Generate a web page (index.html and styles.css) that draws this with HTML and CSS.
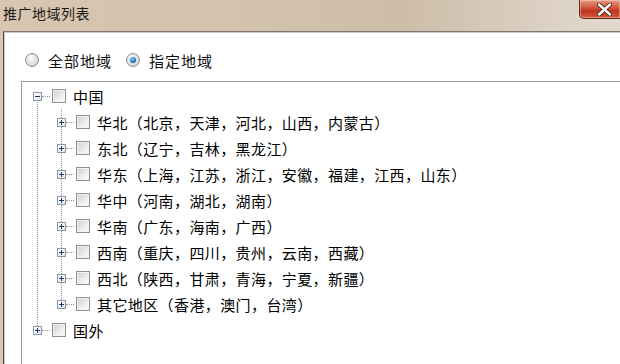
FILE: index.html
```html
<!DOCTYPE html>
<html lang="zh-CN">
<head>
  <meta charset="UTF-8">
  <title>推广地域列表</title>
  <link rel="stylesheet" href="styles.css">
</head>
<body>
  <div class="window">
    <div class="titlebar">
      <span class="title">推广地域列表</span>
      <button class="close">
        <svg width="15" height="13" viewBox="0 0 15 13">
          <path d="M2 1.5 L13 11.5 M13 1.5 L2 11.5" stroke="#4a1e14" stroke-width="4.2" stroke-linecap="round"/>
          <path d="M2 1.5 L13 11.5 M13 1.5 L2 11.5" stroke="#fff" stroke-width="2.4" stroke-linecap="round"/>
        </svg>
      </button>
    </div>

    <div class="frame">
      <div class="panel">
        <div class="radios">
          <label class="radio"><span class="dot"></span>全部地域</label>
          <label class="radio checked"><span class="dot"></span>指定地域</label>
        </div>

        <div class="tree-box">
          <ul class="tree">
            <li class="root first">
              <div class="row"><span class="exp minus"></span><span class="hline"></span><span class="chk"></span><span class="label">中国</span></div>
              <ul class="children">
                <li><div class="row"><span class="exp plus"></span><span class="hline"></span><span class="chk"></span><span class="label">华北（北京，天津，河北，山西，内蒙古）</span></div></li>
                <li><div class="row"><span class="exp plus"></span><span class="hline"></span><span class="chk"></span><span class="label">东北（辽宁，吉林，黑龙江）</span></div></li>
                <li><div class="row"><span class="exp plus"></span><span class="hline"></span><span class="chk"></span><span class="label">华东（上海，江苏，浙江，安徽，福建，江西，山东）</span></div></li>
                <li><div class="row"><span class="exp plus"></span><span class="hline"></span><span class="chk"></span><span class="label">华中（河南，湖北，湖南）</span></div></li>
                <li><div class="row"><span class="exp plus"></span><span class="hline"></span><span class="chk"></span><span class="label">华南（广东，海南，广西）</span></div></li>
                <li><div class="row"><span class="exp plus"></span><span class="hline"></span><span class="chk"></span><span class="label">西南（重庆，四川，贵州，云南，西藏）</span></div></li>
                <li><div class="row"><span class="exp plus"></span><span class="hline"></span><span class="chk"></span><span class="label">西北（陕西，甘肃，青海，宁夏，新疆）</span></div></li>
                <li><div class="row"><span class="exp plus"></span><span class="hline"></span><span class="chk"></span><span class="label">其它地区（香港，澳门，台湾）</span></div></li>
              </ul>
            </li>
            <li class="root last">
              <div class="row"><span class="exp plus"></span><span class="hline"></span><span class="chk"></span><span class="label">国外</span></div>
            </li>
          </ul>
        </div>
      </div>
    </div>
  </div>
</body>
</html>
```

FILE: styles.css
```css
body {
  margin: 0;
  padding: 0;
  background: #fff;
  font-family: "Noto Sans CJK SC", "Liberation Sans", sans-serif;
}
.window {
  width: 620px;
  height: 364px;
  overflow: hidden;
  background: linear-gradient(to right, #d8c6b1, #d2c1ab 45%, #cdbda8 65%, #ddd2c5 90%, #e2d9cd);
}
.titlebar {
  height: 31px;
  display: flex;
  justify-content: space-between;
  align-items: flex-start;
}
.title {
  font-size: 14px;
  line-height: 14px;
  color: #1c1a18;
  margin: 6px 0 0 3px;
  letter-spacing: 0.5px;
}
.close {
  width: 41px;
  height: 20px;
  margin-top: -1px;
  padding: 0 0 0 17px;
  border: 1px solid #5e2a1f;
  border-right: none;
  border-radius: 0 0 0 5px;
  background: linear-gradient(#e69a86, #cf5338 45%, #bf3420 60%, #d5583a);
  display: flex;
  align-items: center;
  box-shadow: inset 0 0 0 1px rgba(255,255,255,0.35);
}
.frame {
  padding-left: 3px;
  height: 333px;
}
.panel {
  height: 100%;
  background: #fff;
  border-left: 1px solid #4d4a46;
  border-top: 1px solid #7c7770;
  box-shadow: inset 1px 1px 0 #c9c6c2;
}
.radios {
  display: flex;
  align-items: center;
  height: 22px;
  padding: 17px 0 0 21px;
  font-size: 15px;
  letter-spacing: 1px;
  color: #111;
}
.radio {
  display: flex;
  align-items: center;
  margin-right: 14px;
}
.dot {
  width: 12px;
  height: 12px;
  border-radius: 50%;
  border: 1px solid #8d8d8d;
  background: radial-gradient(circle at 40% 35%, #fdfdfd, #d6d6d6 70%, #c2c2c2);
  margin-right: 9px;
  display: flex;
  align-items: center;
  justify-content: center;
}
.checked .dot::after {
  content: "";
  width: 6px;
  height: 6px;
  border-radius: 50%;
  background: radial-gradient(circle at 40% 35%, #8ad0f5, #1a6cb8 60%, #0d4f8e);
}
.tree-box {
  margin: 10px 0 0 17px;
  width: 640px;
  height: 300px;
  border-top: 1px solid #9c9c9c;
  border-left: 1px solid #9c9c9c;
  padding-top: 1px;
}
.tree, .children {
  list-style: none;
  margin: 0;
  padding: 0;
}
.tree li {
  position: relative;
}
.children {
  position: relative;
  margin-left: 24px;
}
.root.first::before {
  content: "";
  position: absolute;
  left: 15px;
  top: 13px;
  bottom: 0;
  border-left: 1px dotted #9a9a9a;
}
.root.last::before {
  content: "";
  position: absolute;
  left: 15px;
  top: 0;
  height: 13px;
  border-left: 1px dotted #9a9a9a;
}
.children::before {
  content: "";
  position: absolute;
  left: 15px;
  top: 0;
  bottom: 13px;
  border-left: 1px dotted #9a9a9a;
}
.row {
  display: flex;
  align-items: center;
  height: 26px;
  padding-left: 11px;
  font-size: 15px;
  color: #000;
  white-space: nowrap;
}
.exp {
  position: relative;
  z-index: 1;
  width: 7px;
  height: 7px;
  border: 1px solid #8c96a8;
  background: linear-gradient(135deg, #fff, #dfe2ea);
}
.exp::before {
  content: "";
  position: absolute;
  left: 1px;
  top: 3px;
  width: 5px;
  height: 1px;
  background: #1f3a70;
}
.exp.plus::after {
  content: "";
  position: absolute;
  left: 3px;
  top: 1px;
  width: 1px;
  height: 5px;
  background: #1f3a70;
}
.hline {
  width: 8px;
  margin-right: 2px;
  border-top: 1px dotted #9a9a9a;
}
.chk {
  width: 12px;
  height: 12px;
  border: 1px solid #8e8f8f;
  background: linear-gradient(135deg, #c9ccd1, #eeeeee 60%, #fafafa);
  box-shadow: inset 0 0 0 1px #f4f4f4;
  margin-right: 7px;
}
.label {
  letter-spacing: 0.4px;
}
```
